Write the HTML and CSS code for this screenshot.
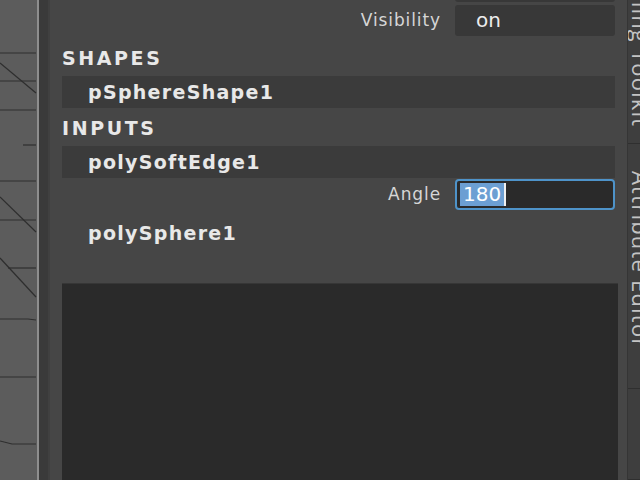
FILE: index.html
```html
<!DOCTYPE html>
<html>
<head>
<meta charset="utf-8">
<link rel="stylesheet" href="styles.css">
</head>
<body>
<div class="app">
  <div class="viewport">
    <svg class="graph" width="37" height="480" viewBox="0 0 37 480">
      <g stroke="#2e2e2e" stroke-width="1.2" fill="none">
        <path d="M0 53 H36"/>
        <path d="M0 63 L36 93"/>
        <path d="M0 81 H36"/>
        <path d="M0 110 H36"/>
        <path d="M23 145 H36"/>
        <path d="M0 181 H36"/>
        <path d="M0 197 L36 232"/>
        <path d="M0 220 H36"/>
        <path d="M0 258 L36 297"/>
        <path d="M8 268 H36"/>
        <path d="M0 319 H28 L36 320"/>
        <path d="M0 377 H36"/>
        <path d="M0 441 L12 444 H36"/>
      </g>
    </svg>
  </div>
  <div class="splitter"></div>
  <div class="panel">
    <div class="channels">
      <div class="attr">
        <span class="attr-label"></span>
        <span class="field"></span>
      </div>
      <div class="attr">
        <span class="attr-label">Visibility</span>
        <span class="field"><span class="value">on</span></span>
      </div>
      <div class="section">SHAPES</div>
      <div class="node">pSphereShape1</div>
      <div class="section">INPUTS</div>
      <div class="node">polySoftEdge1</div>
      <div class="attr">
        <span class="attr-label">Angle</span>
        <span class="field field-active"><span class="value"><span class="sel">180</span><span class="caret"></span></span></span>
      </div>
      <div class="node plain">polySphere1</div>
    </div>
    <div class="layers"></div>
  </div>
  <div class="tabs">
    <div class="tab tab-first"><span class="tab-text">Modeling Toolkit</span></div>
    <div class="tab"><span class="tab-text">Attribute Editor</span></div>
    <div class="tab tab-rest"></div>
  </div>
</div>
</body>
</html>
```
FILE: styles.css
```css
html, body {
  margin: 0;
  padding: 0;
  width: 640px;
  height: 480px;
  overflow: hidden;
  background: #444444;
}

.app {
  display: flex;
  width: 640px;
  height: 480px;
  overflow: hidden;
}

.viewport {
  width: 37px;
  flex: none;
  background: #5c5c5c;
}

.graph {
  display: block;
}

.splitter {
  width: 13px;
  flex: none;
  background: linear-gradient(to right, #8e8e8e 0, #8e8e8e 2px, #3a3a3a 2px, #3a3a3a 11px, #404040 11px);
}

.panel {
  flex: 1;
  display: flex;
  flex-direction: column;
  background: #464646;
  padding: 0 12px 0 12px;
  min-width: 0;
}

.channels {
  display: flex;
  flex-direction: column;
  margin-top: -30px;
}

.attr {
  display: flex;
  align-items: center;
  height: 32px;
  margin-bottom: 2px;
}

.attr-label {
  flex: 1;
  text-align: right;
  padding-right: 14px;
  font-family: "DejaVu Sans", sans-serif;
  font-size: 17px;
  color: #d6d6d6;
  letter-spacing: 0.9px;
}

.field {
  width: 160px;
  height: 31px;
  flex: none;
  background: #383838;
  border-radius: 3px;
  display: flex;
  align-items: center;
  box-sizing: border-box;
}

.value {
  padding-left: 21px;
  font-family: "DejaVu Sans", sans-serif;
  font-size: 20px;
  color: #ececec;
  display: flex;
  align-items: center;
}

.field-active {
  background: #2a2a2a;
  border: 2px solid #4e93c9;
  border-radius: 4px;
}

.field-active .value {
  padding-left: 3px;
}

.sel {
  background: #6c9fd3;
  color: #ffffff;
  padding: 0 3px 0 3px;
  line-height: 23px;
}

.caret {
  width: 2px;
  height: 23px;
  background: #f0f0f0;
}

.section {
  height: 38px;
  display: flex;
  align-items: center;
  font-family: "DejaVu Sans", sans-serif;
  font-weight: bold;
  font-size: 19px;
  letter-spacing: 2.6px;
  color: #e8e8e8;
  padding-top: 2px;
  box-sizing: border-box;
}

.node {
  height: 32px;
  display: flex;
  align-items: center;
  background: #3b3b3b;
  padding-left: 26px;
  font-family: "DejaVu Sans", sans-serif;
  font-weight: bold;
  font-size: 19px;
  letter-spacing: 1.3px;
  color: #e8e8e8;
}

.node.plain {
  background: transparent;
  height: 42px;
}

.layers {
  margin-top: 29px;
  flex: 1;
  background: #2a2a2a;
  border-top: 1px solid #363636;
  margin-right: -3px;
}

.tabs {
  width: 12px;
  flex: none;
  display: flex;
  flex-direction: column;
  background: #3e3e3e;
  border-left: 1px solid #353535;
  overflow: hidden;
}

.tab {
  flex: none;
  display: flex;
  justify-content: center;
  border-bottom: 1px solid #2f2f2f;
  overflow: visible;
}

.tab-first {
  margin-top: -72px;
  height: 216px;
  align-items: flex-end;
  padding-bottom: 16px;
  box-sizing: border-box;
}

.tab + .tab {
  height: 245px;
  padding-top: 27px;
  box-sizing: border-box;
}

.tab-rest {
  flex: 1;
}

.tab-text {
  writing-mode: vertical-rl;
  font-family: "Open Sans", sans-serif;
  font-size: 22px;
  letter-spacing: 1.2px;
  color: #c4c4c4;
  margin-left: 14px;
  white-space: nowrap;
}
```
